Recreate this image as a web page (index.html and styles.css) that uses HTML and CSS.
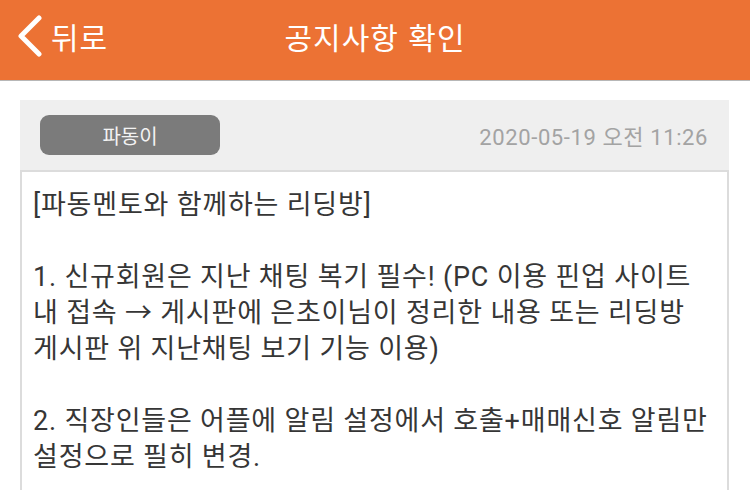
FILE: index.html
```html
<!DOCTYPE html>
<html lang="ko">
<head>
<meta charset="utf-8">
<title>공지사항 확인</title>
<link rel="stylesheet" href="styles.css">
</head>
<body>
<header class="topbar">
  <a class="back" href="#">
    <svg class="back-icon" width="26" height="42" viewBox="0 0 26 42" aria-hidden="true">
      <path d="M22 3 L4 21 L22 39" fill="none" stroke="#ffffff" stroke-width="5" stroke-linecap="round" stroke-linejoin="round"/>
    </svg>
    <span class="back-label">뒤로</span>
  </a>
  <h1 class="title">공지사항 확인</h1>
  <div class="spacer"></div>
</header>
<main class="content">
  <section class="notice">
    <div class="notice-head">
      <span class="author">파동이</span>
      <time class="date">2020-05-19 오전 11:26</time>
    </div>
    <div class="notice-body">
<p class="notice-text">[파동멘토와 함께하는 리딩방]

1. 신규회원은 지난 채팅 복기 필수! (PC 이용 핀업 사이트
내 접속 → 게시판에 은초이님이 정리한 내용 또는 리딩방
게시판 위 지난채팅 보기 기능 이용)

2. 직장인들은 어플에 알림 설정에서 호출+매매신호 알림만
설정으로 필히 변경.</p>
    </div>
  </section>
</main>
</body>
</html>
```
FILE: styles.css
```css
html, body {
  margin: 0;
  padding: 0;
  background: #ffffff;
  font-family: Roboto, "Noto Sans CJK KR", sans-serif;
}

.topbar {
  height: 80px;
  background: #ec7234;
  border-bottom: 1px solid #b7b7b7;
  display: grid;
  grid-template-columns: 1fr auto 1fr;
  align-items: center;
}

.back {
  display: flex;
  align-items: center;
  gap: 8px;
  padding-left: 17px;
  color: #ffffff;
  text-decoration: none;
  padding-bottom: 8px;
}

.back-icon {
  display: block;
}

.back-label {
  font-size: 30px;
  letter-spacing: 1px;
  line-height: 1;
  font-family: "Noto Sans CJK KR", sans-serif;
}

.title {
  margin: 0;
  color: #ffffff;
  font-size: 30px;
  letter-spacing: 1px;
  font-weight: 400;
  line-height: 1;
  font-family: "Noto Sans CJK KR", sans-serif;
  padding-bottom: 8px;
}

.content {
  padding: 19px 21px 0 20px;
}

.notice {
  background: #efefef;
}

.notice-head {
  display: flex;
  align-items: center;
  justify-content: space-between;
  padding: 15px 21px 15px 20px;
}

.author {
  width: 180px;
  height: 40px;
  border-radius: 9px;
  background: #7b7b7b;
  color: #f3f3f3;
  font-size: 20px;
  font-family: "Noto Sans CJK KR", sans-serif;
  display: flex;
  align-items: center;
  justify-content: center;
}

.date {
  color: #a3a3a3;
  font-size: 22px;
  letter-spacing: 0.6px;
}

.notice-body {
  background: #ffffff;
  border: 2px solid #dcdcdc;
  border-bottom: none;
  padding: 15px 8px 15px 11px;
}

.notice-text {
  margin: 0;
  white-space: pre-line;
  font-size: 27px;
  letter-spacing: 0.8px;
  line-height: 36px;
  color: #363636;
}
```
